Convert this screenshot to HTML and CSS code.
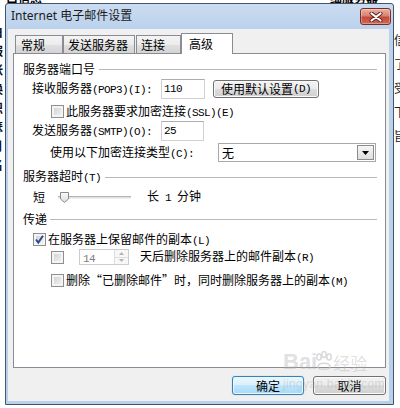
FILE: index.html
```html
<!DOCTYPE html>
<html lang="zh-CN">
<head>
<meta charset="utf-8">
<title>Internet 电子邮件设置</title>
<link rel="stylesheet" href="styles.css">
</head>
<body>
<div class="desk">
  <div class="frag-left">白<br>服<br>帐<br>换<br>识<br>瑟<br>月<br>名</div>
  <div class="frag-right">信<br>了<br>受<br>下<br>旨</div>
  <div class="frag-top">白信息</div>
  <div class="frag-top2">细服务器</div>
</div>
<div class="win">
  <div class="titlebar">
    <span class="title">Internet 电子邮件设置</span>
    <div class="close">
      <svg width="14" height="10" viewBox="0 0 14 10"><path d="M2.5 1.5 L11.5 8.5 M11.5 1.5 L2.5 8.5" stroke="#5a2019" stroke-width="4" stroke-linecap="round"/><path d="M2.5 1.5 L11.5 8.5 M11.5 1.5 L2.5 8.5" stroke="#fff" stroke-width="2.2" stroke-linecap="round"/></svg>
    </div>
  </div>
  <div class="client">
    <div class="tabs">
      <div class="tab t1">常规</div>
      <div class="tab t2">发送服务器</div>
      <div class="tab t3">连接</div>
      <div class="tab sel">高级</div>
    </div>
    <div class="panel">
      <div class="grp g1"><span>服务器端口号</span><i class="rule"></i></div>
      <div class="row r-pop">
        <span class="lbl">接收服务器<span class="en">(POP3)(I):</span></span>
        <div class="edit e-pop"><span class="en">110</span></div>
        <div class="btn b-def">使用默认设置<span class="en">(D)</span></div>
      </div>
      <div class="row r-ssl">
        <span class="cb"></span>
        <span class="ctext">此服务器要求加密连接<span class="en">(SSL)(E)</span></span>
      </div>
      <div class="row r-smtp">
        <span class="lbl">发送服务器<span class="en">(SMTP)(O):</span></span>
        <div class="edit e-smtp"><span class="en">25</span></div>
      </div>
      <div class="row r-enc">
        <span class="lbl lbl-enc">使用以下加密连接类型<span class="en">(C):</span></span>
        <div class="select">
          <span>无</span>
          <span class="arrow"><svg width="7" height="4" viewBox="0 0 7 4"><path d="M0 0 H7 L3.5 4 Z" fill="#000"/></svg></span>
        </div>
      </div>
      <div class="grp g2"><span>服务器超时<span class="en">(T)</span></span><i class="rule"></i></div>
      <div class="row r-slide">
        <span>短</span>
        <span class="track">
          <svg class="thumb" width="9" height="11" viewBox="0 0 9 11"><defs><linearGradient id="tg" x1="0" y1="0" x2="0" y2="1"><stop offset="0" stop-color="#fdfdfd"/><stop offset="1" stop-color="#d9d9d9"/></linearGradient></defs><path d="M0.5 0.5 H8.5 V7 L4.5 10.5 L0.5 7 Z" fill="url(#tg)" stroke="#8a8a8a"/></svg>
        </span>
        <span class="long">长<span class="en"> 1 </span>分钟</span>
      </div>
      <div class="grp g3"><span>传递</span><i class="rule"></i></div>
      <div class="row r-leave">
        <span class="cb on"><svg width="11" height="11" viewBox="0 0 11 11"><path d="M2 5.5 L4.3 8.5 L9 1.8" fill="none" stroke="#2c4a8a" stroke-width="2"/></svg></span>
        <span class="ctext">在服务器上保留邮件的副本<span class="en">(L)</span></span>
      </div>
      <div class="row r-days">
        <span class="cb"></span>
        <div class="spin">
          <span class="val"><span class="en">14</span></span>
          <span class="sbtns">
            <span class="sb"><svg width="5" height="3" viewBox="0 0 5 3"><path d="M0 3 L2.5 0 L5 3 Z" fill="#b3b3b3"/></svg></span>
            <span class="sb"><svg width="5" height="3" viewBox="0 0 5 3"><path d="M0 0 L2.5 3 L5 0 Z" fill="#b3b3b3"/></svg></span>
          </span>
        </div>
        <span class="ctext days">天后删除服务器上的邮件副本<span class="en">(R)</span></span>
      </div>
      <div class="row r-del">
        <span class="cb"></span>
        <span class="ctext">删除<span class="q ql">“</span>已删除邮件<span class="q qr">”</span>时，同时删除服务器上的副本<span class="en">(M)</span></span>
      </div>
    </div>
    <div class="actions">
      <div class="btn ok">确定</div>
      <div class="btn cancel">取消</div>
    </div>
  </div>
</div>
<div class="wm">
  <div class="wm-top"><span class="wm-bai">Bai</span><svg class="wm-paw" width="20" height="20" viewBox="0 0 20 20"><g fill="none" stroke="#c8c8c8" stroke-width="1.5"><ellipse cx="5" cy="6" rx="2.2" ry="3"/><ellipse cx="10" cy="3.5" rx="2.2" ry="3"/><ellipse cx="15" cy="6" rx="2.2" ry="3"/><path d="M4 16 C4 11 16 11 16 16 C16 19 4 19 4 16 Z"/></g></svg><span class="wm-jy">经验</span></div>
  <div class="wm-url">jingyan.baidu.com</div>
</div>
</body>
</html>
```
FILE: styles.css
```css
* { box-sizing: border-box; }

body {
  margin: 0;
  padding: 3px 0 0 5px;
  width: 400px;
  height: 408px;
  overflow: hidden;
  background: #fff;
  font-family: "Noto Sans CJK SC", "Noto Sans", sans-serif;
  font-size: 12px;
  line-height: 14px;
  color: #000;
  position: relative;
}

.en {
  font-family: "Liberation Mono", "Noto Sans CJK SC", monospace;
  font-size: 11px;
  letter-spacing: -0.6px;
  white-space: pre;
}

.q { display: inline-block; width: 12px; }
.ql { text-align: right; }
.qr { text-align: left; }

/* desktop fragments behind the dialog */
.desk { position: absolute; inset: 0; z-index: 0; }
.frag-left {
  position: absolute; left: -9px; top: 22px;
  font-size: 12px; line-height: 19px; font-weight: bold; color: #111;
}
.frag-right {
  position: absolute; left: 394px; top: 28px;
  font-size: 12px; line-height: 24px; color: #222;
}
.frag-top { position: absolute; left: 6px; top: -9px; font-weight: bold; }
.frag-top2 { position: absolute; left: 330px; top: -9px; font-weight: bold; }

/* window */
.win {
  position: relative;
  z-index: 1;
  width: 389px;
  height: 402px;
  border: 1px solid #44546a;
  border-radius: 3px 3px 0 0;
  background: linear-gradient(#cadcf1, #bcd2ec 24px, #b9cfea);
  display: flex;
  flex-direction: column;
}

.titlebar {
  height: 25px;
  display: flex;
  align-items: flex-start;
  flex: none;
}
.title {
  flex: 1;
  margin: 4px 0 0 5px;
  font-family: "Noto Sans", "Noto Sans CJK SC", sans-serif;
  font-size: 12px;
  line-height: 16px;
  color: #1b1b1b;
}
.close {
  width: 31px;
  height: 17px;
  margin: 4px 2px 0 0;
  border: 1px solid #7a2e26;
  border-radius: 3px;
  background: linear-gradient(#eab0a3, #d98270 45%, #c54a3a 55%, #cd6a58);
  box-shadow: inset 0 0 0 1px rgba(255, 255, 255, 0.3);
  display: flex;
  align-items: center;
  justify-content: center;
}

.client {
  flex: 1;
  margin: 0 4px 3px 2px;
  background: #f0f0f0;
  padding: 4px 0 0 5px;
  display: flex;
  flex-direction: column;
}

/* tabs */
.tabs {
  height: 20px;
  display: flex;
  align-items: flex-end;
  padding-left: 2px;
  position: relative;
  z-index: 2;
  flex: none;
}
.tab {
  height: 18px;
  border: 1px solid #898c95;
  border-bottom: none;
  background: linear-gradient(#f4f4f4, #ececec 50%, #e0e0e0 50%, #d4d4d4);
  padding: 2px 0 0 5px;
  line-height: 14px;
  white-space: nowrap;
}
.t1 { width: 48px; }
.t2 { width: 72px; padding-left: 4px; }
.t3 { width: 45px; margin-left: 1px; padding-left: 4px; }
.sel {
  width: 52px;
  height: 21px;
  margin-bottom: -1px;
  background: #fff;
  padding: 3px 0 0 7px;
}

.panel {
  width: 373px;
  height: 315px;
  border: 1px solid #898c95;
  background: #fff;
  display: flex;
  flex-direction: column;
  flex: none;
}

.grp {
  height: 14px;
  display: flex;
  align-items: center;
  padding-left: 9px;
  margin-right: 8px;
  gap: 4px;
  white-space: nowrap;
}
.rule {
  flex: 1;
  height: 1px;
  background: #b9b9b9;
}
.g1 { margin-top: 8px; }
.g2 { margin-top: 8px; }
.g3 { margin-top: 8px; gap: 3px; }

.row {
  display: flex;
  align-items: center;
  white-space: nowrap;
}
.lbl { width: 129px; flex: none; }
.lbl-enc { width: 168px; }

.r-pop { margin-top: 3px; height: 20px; padding-left: 18px; }
.r-ssl { margin-top: 6px; height: 13px; padding-left: 37px; }
.r-smtp { margin-top: 3px; height: 20px; padding-left: 18px; }
.r-enc { margin-top: 2px; height: 19px; padding-left: 36px; }
.r-slide { margin-top: 6px; height: 14px; padding-left: 19px; }
.r-leave { margin-top: 7px; height: 13px; padding-left: 19px; }
.r-days { margin-top: 3px; height: 16px; padding-left: 37px; }
.r-del { margin-top: 9px; height: 13px; padding-left: 37px; }

.ctext { margin-left: 2px; }
.days { margin-left: 11px; }

.edit {
  height: 20px;
  border: 1px solid #cdd1d7;
  border-top-color: #abadb3;
  background: #fff;
  padding-left: 2px;
  display: flex;
  align-items: center;
}
.e-pop { width: 44px; }
.e-smtp { width: 43px; }

.btn {
  height: 18px;
  border: 1px solid #707070;
  border-radius: 3px;
  background: linear-gradient(#f2f2f2, #ebebeb 50%, #dddddd 50%, #cfcfcf);
  box-shadow: inset 0 0 0 1px #fbfbfb;
  display: flex;
  align-items: center;
  justify-content: center;
  white-space: nowrap;
}
.b-def { width: 106px; margin-left: 8px; }

.select {
  width: 158px;
  height: 19px;
  border: 1px solid #a9a9a9;
  background: #fff;
  display: flex;
  align-items: center;
  padding-left: 3px;
}
.arrow {
  margin-left: auto;
  margin-right: 1px;
  width: 17px;
  height: 15px;
  border: 1px solid #8c8c8c;
  background: linear-gradient(#f6f6f6, #dedede);
  display: flex;
  align-items: center;
  justify-content: center;
}

.cb {
  width: 13px;
  height: 13px;
  flex: none;
  border: 1px solid #8e8f8f;
  background: linear-gradient(135deg, #c9ccd2, #f7f7f7);
  box-shadow: inset 0 0 0 2px #f4f4f4;
  display: flex;
  align-items: center;
  justify-content: center;
}

.track {
  position: relative;
  width: 73px;
  height: 3px;
  margin-left: 13px;
  border-top: 1px solid #b3b3b3;
  border-bottom: 1px solid #eeeeee;
  background: #e2e2e2;
}
.thumb { position: absolute; left: 2px; top: -5px; }
.long { margin-left: 16px; }

.spin {
  width: 50px;
  height: 16px;
  margin-left: 15px;
  border: 1px solid #c9ccd1;
  background: #fff;
  display: flex;
}
.val {
  flex: 1;
  padding-left: 3px;
  color: #7d7d7d;
  line-height: 14px;
}
.sbtns {
  width: 14px;
  display: flex;
  flex-direction: column;
  border-left: 1px solid #dcdee1;
}
.sb {
  flex: 1;
  display: flex;
  align-items: center;
  justify-content: center;
  background: #f7f7f7;
}
.sb + .sb { border-top: 1px solid #dcdee1; }

.actions {
  margin-top: 8px;
  display: flex;
  justify-content: flex-end;
  gap: 9px;
  padding-right: 3px;
}
.ok, .cancel { height: 19px; width: 72px; }
.cancel { width: 73px; }
.ok {
  border-color: #3c7fb1;
  background: linear-gradient(#eaf6fd, #d9f0fc 50%, #bee6fd 50%, #a7d9f5);
  box-shadow: inset 0 0 0 1px #e8f6fd, 0 0 1px #4fb4e8;
}

/* watermark over the corner */
.wm {
  position: absolute;
  left: 283px;
  top: 351px;
  z-index: 3;
  color: rgba(175, 175, 175, 0.4);
  pointer-events: none;
}
.wm-top { display: flex; align-items: flex-end; height: 22px; }
.wm-bai { font-family: "Liberation Sans", sans-serif; font-size: 22px; font-weight: bold; line-height: 22px; }
.wm-paw { opacity: 0.7; margin-left: -3px; margin-bottom: 2px; }
.wm-jy { font-size: 17px; line-height: 20px; margin-left: -1px; }
.wm-url { font-family: "Liberation Sans", sans-serif; font-size: 12px; line-height: 14px; margin-top: 4px; letter-spacing: 0.3px; }
```
